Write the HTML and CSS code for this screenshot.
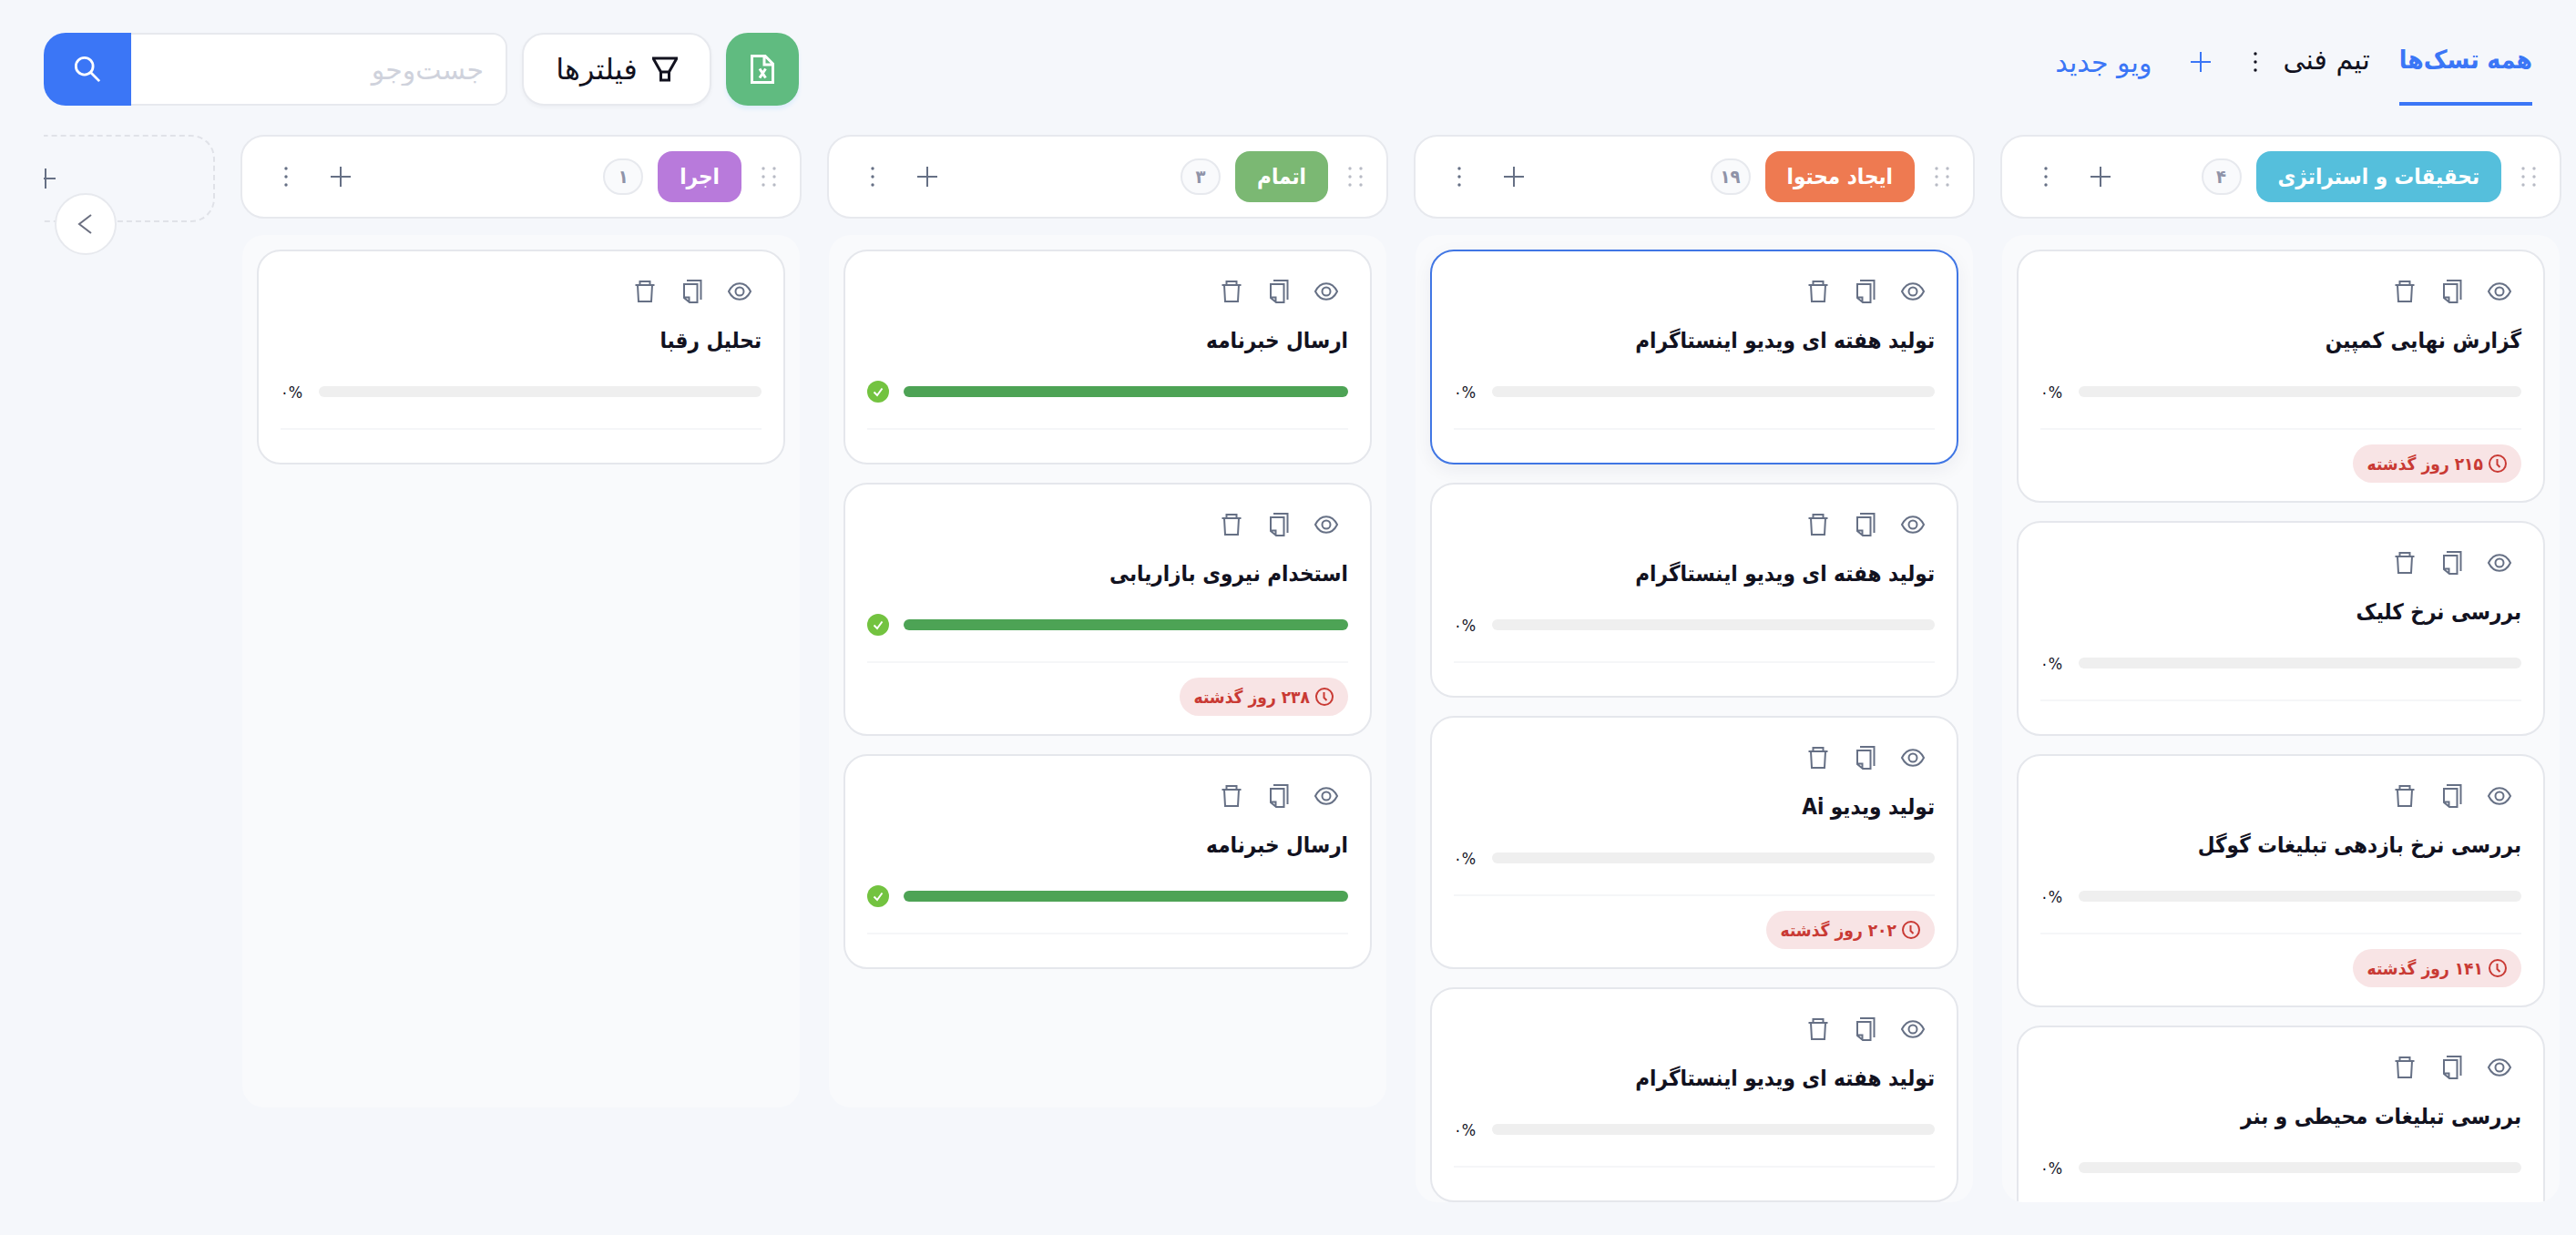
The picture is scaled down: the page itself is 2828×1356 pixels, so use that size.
FILE: index.html
```html
<!DOCTYPE html>
<html lang="fa" dir="rtl">
<head>
  <meta charset="UTF-8">
  <title>تسک‌ها</title>
  <link rel="stylesheet" href="styles.css">
</head>
<body>
  <!-- icons -->
  <svg class="sprite">
    <symbol id="eye" viewBox="0 0 28 28"><path d="M2 14C5 8 9 5.200 14 5.200S23 8 26 14C23 20 19 22.800 14 22.800S5 20 2 14Z"/><circle cx="14" cy="14" r="4.500"/></symbol>
    <symbol id="copy" viewBox="0 0 28 28"><path d="M8 2H23.500V23M5 6H19.500V26H11L5 21ZM5 20.500H10.500V26"/></symbol>
    <symbol id="trash" viewBox="0 0 28 28"><path d="M3.500 7H24.500M8.500 7V3H19.500V7M6 7L7 25H21L22 7"/></symbol>
    <symbol id="plus" viewBox="0 0 28 28"><path d="M14 3V25M3 14H25"/></symbol>
    <symbol id="more" viewBox="0 0 28 28"><circle cx="14" cy="5" r="1.700"/><circle cx="14" cy="14" r="1.700"/><circle cx="14" cy="23" r="1.700"/></symbol>
    <symbol id="grip" viewBox="0 0 28 28"><circle cx="8" cy="5" r="1.700"/><circle cx="20" cy="5" r="1.700"/><circle cx="8" cy="14" r="1.700"/><circle cx="20" cy="14" r="1.700"/><circle cx="8" cy="23" r="1.700"/><circle cx="20" cy="23" r="1.700"/></symbol>
    <symbol id="clock" viewBox="0 0 20 20"><circle cx="10" cy="10" r="9"/><path d="M9.500 5V11L12.500 14"/></symbol>
    <symbol id="check" viewBox="0 0 24 24"><circle cx="12" cy="12" r="12"/><path d="M7.500 12.500L11 16L16.500 8.500"/></symbol>
    <symbol id="funnel" viewBox="0 0 28 28"><path d="M1 2H27L18.500 17V26H9.500V17ZM9.500 17H18.500"/></symbol>
    <symbol id="sheet" viewBox="0 0 26 32"><path d="M1.500 1.500H16L24.500 10V30.500H1.500ZM15 1.500V11H24.500M10 15.500L16.500 25.500M16.500 15.500L10 25.500"/></symbol>
    <symbol id="search" viewBox="0 0 32 32"><circle cx="12.500" cy="12.500" r="10"/><path d="M19.500 19.500L30 30"/></symbol>
    <symbol id="back" viewBox="0 0 28 28"><path d="M20 4L7 14L20 24"/></symbol>
  </svg>

  <header class="topbar">
    <nav class="tabs">
      <a href="#" class="tab active">همه تسک‌ها</a>
      <a href="#" class="tab">تیم فنی</a>
      <button class="tab-more" aria-label="گزینه‌ها"><svg class="icon dots"><use href="#more"/></svg></button>
      <button class="new-view"><svg class="icon"><use href="#plus"/></svg>ویو جدید</button>
    </nav>
    <div class="tools">
      <button class="excel" aria-label="خروجی اکسل"><svg><use href="#sheet"/></svg></button>
      <button class="filter"><svg class="icon"><use href="#funnel"/></svg>فیلترها</button>
      <form class="search">
        <input type="search" placeholder="جست‌وجو" aria-label="جست‌وجو">
        <button type="button" aria-label="جست‌وجو"><svg><use href="#search"/></svg></button>
      </form>
    </div>
  </header>

  <main class="board">
    <section class="column">
      <div class="column-head">
        <svg class="icon dots grip"><use href="#grip"/></svg>
        <h2 class="label cyan">تحقیقات و استراتژی</h2>
        <span class="count">۴</span>
        <div class="head-actions">
          <button aria-label="افزودن"><svg class="icon"><use href="#plus"/></svg></button>
          <button aria-label="گزینه‌ها"><svg class="icon dots"><use href="#more"/></svg></button>
        </div>
      </div>
      <div class="column-body">
        <article class="card">
          <div class="actions">
            <button aria-label="نمایش"><svg class="icon"><use href="#eye"/></svg></button>
            <button aria-label="کپی"><svg class="icon"><use href="#copy"/></svg></button>
            <button aria-label="حذف"><svg class="icon"><use href="#trash"/></svg></button>
          </div>
          <h3>گزارش نهایی کمپین</h3>
          <div class="progress"><div class="bar"></div><span>۰%</span></div>
          <div class="card-foot"><span class="late"><svg><use href="#clock"/></svg>۲۱۵ روز گذشته</span></div>
        </article>
        <article class="card">
          <div class="actions">
            <button aria-label="نمایش"><svg class="icon"><use href="#eye"/></svg></button>
            <button aria-label="کپی"><svg class="icon"><use href="#copy"/></svg></button>
            <button aria-label="حذف"><svg class="icon"><use href="#trash"/></svg></button>
          </div>
          <h3>بررسی نرخ کلیک</h3>
          <div class="progress"><div class="bar"></div><span>۰%</span></div>
          <div class="card-foot"></div>
        </article>
        <article class="card">
          <div class="actions">
            <button aria-label="نمایش"><svg class="icon"><use href="#eye"/></svg></button>
            <button aria-label="کپی"><svg class="icon"><use href="#copy"/></svg></button>
            <button aria-label="حذف"><svg class="icon"><use href="#trash"/></svg></button>
          </div>
          <h3>بررسی نرخ بازدهی تبلیغات گوگل</h3>
          <div class="progress"><div class="bar"></div><span>۰%</span></div>
          <div class="card-foot"><span class="late"><svg><use href="#clock"/></svg>۱۴۱ روز گذشته</span></div>
        </article>
        <article class="card">
          <div class="actions">
            <button aria-label="نمایش"><svg class="icon"><use href="#eye"/></svg></button>
            <button aria-label="کپی"><svg class="icon"><use href="#copy"/></svg></button>
            <button aria-label="حذف"><svg class="icon"><use href="#trash"/></svg></button>
          </div>
          <h3>بررسی تبلیغات محیطی و بنر</h3>
          <div class="progress"><div class="bar"></div><span>۰%</span></div>
          <div class="card-foot"></div>
        </article>
      </div>
    </section>

    <section class="column">
      <div class="column-head">
        <svg class="icon dots grip"><use href="#grip"/></svg>
        <h2 class="label orange">ایجاد محتوا</h2>
        <span class="count">۱۹</span>
        <div class="head-actions">
          <button aria-label="افزودن"><svg class="icon"><use href="#plus"/></svg></button>
          <button aria-label="گزینه‌ها"><svg class="icon dots"><use href="#more"/></svg></button>
        </div>
      </div>
      <div class="column-body">
        <article class="card selected">
          <div class="actions">
            <button aria-label="نمایش"><svg class="icon"><use href="#eye"/></svg></button>
            <button aria-label="کپی"><svg class="icon"><use href="#copy"/></svg></button>
            <button aria-label="حذف"><svg class="icon"><use href="#trash"/></svg></button>
          </div>
          <h3>تولید هفته ای ویدیو اینستاگرام</h3>
          <div class="progress"><div class="bar"></div><span>۰%</span></div>
          <div class="card-foot"></div>
        </article>
        <article class="card">
          <div class="actions">
            <button aria-label="نمایش"><svg class="icon"><use href="#eye"/></svg></button>
            <button aria-label="کپی"><svg class="icon"><use href="#copy"/></svg></button>
            <button aria-label="حذف"><svg class="icon"><use href="#trash"/></svg></button>
          </div>
          <h3>تولید هفته ای ویدیو اینستاگرام</h3>
          <div class="progress"><div class="bar"></div><span>۰%</span></div>
          <div class="card-foot"></div>
        </article>
        <article class="card">
          <div class="actions">
            <button aria-label="نمایش"><svg class="icon"><use href="#eye"/></svg></button>
            <button aria-label="کپی"><svg class="icon"><use href="#copy"/></svg></button>
            <button aria-label="حذف"><svg class="icon"><use href="#trash"/></svg></button>
          </div>
          <h3>تولید ویدیو Ai</h3>
          <div class="progress"><div class="bar"></div><span>۰%</span></div>
          <div class="card-foot"><span class="late"><svg><use href="#clock"/></svg>۲۰۲ روز گذشته</span></div>
        </article>
        <article class="card">
          <div class="actions">
            <button aria-label="نمایش"><svg class="icon"><use href="#eye"/></svg></button>
            <button aria-label="کپی"><svg class="icon"><use href="#copy"/></svg></button>
            <button aria-label="حذف"><svg class="icon"><use href="#trash"/></svg></button>
          </div>
          <h3>تولید هفته ای ویدیو اینستاگرام</h3>
          <div class="progress"><div class="bar"></div><span>۰%</span></div>
          <div class="card-foot"></div>
        </article>
      </div>
    </section>

    <section class="column">
      <div class="column-head">
        <svg class="icon dots grip"><use href="#grip"/></svg>
        <h2 class="label green">اتمام</h2>
        <span class="count">۳</span>
        <div class="head-actions">
          <button aria-label="افزودن"><svg class="icon"><use href="#plus"/></svg></button>
          <button aria-label="گزینه‌ها"><svg class="icon dots"><use href="#more"/></svg></button>
        </div>
      </div>
      <div class="column-body">
        <article class="card">
          <div class="actions">
            <button aria-label="نمایش"><svg class="icon"><use href="#eye"/></svg></button>
            <button aria-label="کپی"><svg class="icon"><use href="#copy"/></svg></button>
            <button aria-label="حذف"><svg class="icon"><use href="#trash"/></svg></button>
          </div>
          <h3>ارسال خبرنامه</h3>
          <div class="progress"><div class="bar done"></div><svg class="check"><use href="#check"/></svg></div>
          <div class="card-foot"></div>
        </article>
        <article class="card">
          <div class="actions">
            <button aria-label="نمایش"><svg class="icon"><use href="#eye"/></svg></button>
            <button aria-label="کپی"><svg class="icon"><use href="#copy"/></svg></button>
            <button aria-label="حذف"><svg class="icon"><use href="#trash"/></svg></button>
          </div>
          <h3>استخدام نیروی بازاریابی</h3>
          <div class="progress"><div class="bar done"></div><svg class="check"><use href="#check"/></svg></div>
          <div class="card-foot"><span class="late"><svg><use href="#clock"/></svg>۲۳۸ روز گذشته</span></div>
        </article>
        <article class="card">
          <div class="actions">
            <button aria-label="نمایش"><svg class="icon"><use href="#eye"/></svg></button>
            <button aria-label="کپی"><svg class="icon"><use href="#copy"/></svg></button>
            <button aria-label="حذف"><svg class="icon"><use href="#trash"/></svg></button>
          </div>
          <h3>ارسال خبرنامه</h3>
          <div class="progress"><div class="bar done"></div><svg class="check"><use href="#check"/></svg></div>
          <div class="card-foot"></div>
        </article>
      </div>
    </section>

    <section class="column">
      <div class="column-head">
        <svg class="icon dots grip"><use href="#grip"/></svg>
        <h2 class="label purple">اجرا</h2>
        <span class="count">۱</span>
        <div class="head-actions">
          <button aria-label="افزودن"><svg class="icon"><use href="#plus"/></svg></button>
          <button aria-label="گزینه‌ها"><svg class="icon dots"><use href="#more"/></svg></button>
        </div>
      </div>
      <div class="column-body">
        <article class="card">
          <div class="actions">
            <button aria-label="نمایش"><svg class="icon"><use href="#eye"/></svg></button>
            <button aria-label="کپی"><svg class="icon"><use href="#copy"/></svg></button>
            <button aria-label="حذف"><svg class="icon"><use href="#trash"/></svg></button>
          </div>
          <h3>تحلیل رقبا</h3>
          <div class="progress"><div class="bar"></div><span>۰%</span></div>
          <div class="card-foot"></div>
        </article>
      </div>
    </section>

    <button class="add-column" aria-label="ستون جدید"><svg class="icon"><use href="#plus"/></svg></button>
  </main>

  <button class="scroll-next" aria-label="بعدی"><svg class="icon"><use href="#back"/></svg></button>
</body>
</html>
```

FILE: styles.css
```css
* {
  box-sizing: border-box;
}

body {
  margin: 0;
  height: 100vh;
  padding: 36px 0;
  display: flex;
  flex-direction: column;
  gap: 32px;
  overflow: hidden;
  background: #f5f7fb;
  color: #12121f;
  font-family: "DejaVu Sans Condensed", "DejaVu Sans", sans-serif;
  font-size: 24px;
}

button {
  display: flex;
  align-items: center;
  justify-content: center;
  padding: 0;
  border: none;
  background: none;
  color: inherit;
  font: inherit;
  cursor: pointer;
}

h2, h3 {
  margin: 0;
}

svg {
  display: block;
  flex: none;
  fill: none;
  stroke: currentColor;
  stroke-width: 2;
}

.sprite {
  display: none;
}

.icon {
  width: 28px;
  height: 28px;
}

.dots {
  fill: currentColor;
  stroke: none;
}

/* top bar */
.topbar {
  display: flex;
  justify-content: space-between;
  height: 80px;
  flex: none;
  padding: 0 48px;
  font-family: "DejaVu Sans", sans-serif;
  font-size: 30px;
}

.tabs {
  display: flex;
}

.tab {
  display: flex;
  margin-left: 32px;
  padding-top: 12px;
  line-height: 36px;
  border-bottom: 4px solid transparent;
  color: #12121f;
  text-decoration: none;
}

.tab.active {
  color: #3b76f6;
  border-color: #3b76f6;
  font-family: "DejaVu Sans Condensed", "DejaVu Sans", sans-serif;
  font-size: 28px;
  font-weight: bold;
}

.tab-more {
  height: 64px;
  margin-right: -16px;
}

.new-view {
  height: 64px;
  gap: 40px;
  margin-right: 32px;
  color: #3b76f6;
}

.tools {
  display: flex;
  gap: 16px;
}

.excel {
  width: 80px;
  border-radius: 24px;
  background: #60bb80;
  color: #ffffff;
  box-shadow: 0 4px 4px #dfeefc;
}

.excel svg {
  width: 26px;
  height: 32px;
  stroke-width: 3;
}

.filter {
  gap: 16px;
  width: 208px;
  border: 2px solid #e7e9ee;
  border-radius: 24px;
  background: #ffffff;
  font-size: 32px;
  box-shadow: 0 2px 4px rgba(20, 30, 60, 0.04);
}

.filter svg {
  stroke-width: 3;
}

.search {
  display: flex;
  width: 509px;
}

.search input {
  flex: 1;
  min-width: 0;
  padding: 0 24px;
  border: 2px solid #e7e9ee;
  border-left: none;
  border-radius: 0 16px 16px 0;
  background: #ffffff;
  font: inherit;
}

.search input::placeholder {
  color: #cfd2dc;
}

.search button {
  width: 96px;
  border-radius: 24px 0 0 24px;
  background: #3b76f6;
  color: #ffffff;
}

.search svg {
  width: 30px;
  height: 30px;
  stroke-width: 3;
}

/* board */
.board {
  flex: 1;
  min-height: 0;
  display: flex;
  align-items: flex-start;
  gap: 28px;
  margin-left: 48px;
  padding-right: 16px;
  overflow: hidden;
}

.column {
  flex: none;
  display: flex;
  flex-direction: column;
  gap: 18px;
  width: 616px;
  max-height: 100%;
}

.column-head {
  display: flex;
  align-items: center;
  flex: none;
  gap: 16px;
  height: 92px;
  padding: 0 20px 0 24px;
  border: 2px solid #e7e9ee;
  border-radius: 26px;
  background: #ffffff;
}

.grip {
  color: #b8bbc5;
}

.label {
  padding: 0 24px;
  border-radius: 16px;
  color: #ffffff;
  font-size: 24px;
  line-height: 56px;
}

.cyan {
  background: #55bfdc;
}

.orange {
  background: #ee7a51;
}

.green {
  background: #7bb873;
}

.purple {
  background: #b87adb;
}

.count {
  width: 44px;
  border: 2px solid #e7e9ee;
  border-radius: 22px;
  background: #f9fafc;
  color: #8f93a8;
  font-size: 20px;
  font-weight: bold;
  line-height: 36px;
  text-align: center;
}

.head-actions {
  display: flex;
  gap: 12px;
  margin-right: auto;
  color: #667085;
}

.head-actions button {
  width: 48px;
  height: 48px;
}

.column-body {
  display: flex;
  flex-direction: column;
  gap: 20px;
  min-height: 958px;
  margin: 0 2px;
  padding: 16px;
  border-radius: 24px;
  background: #f9fafc;
  overflow: hidden;
}

.card {
  flex: none;
  padding: 24px 24px 20px;
  border: 2px solid #e5e7ec;
  border-radius: 26px;
  background: #ffffff;
}

.card.selected {
  border-color: #4076e4;
  box-shadow: 0 6px 20px rgba(20, 30, 60, 0.06);
}

.actions {
  display: flex;
  gap: 4px;
  color: #667085;
}

.actions button {
  width: 48px;
  height: 40px;
}

.card h3 {
  margin-top: 12px;
  font-size: 24px;
  line-height: 44px;
}

.progress {
  display: flex;
  align-items: center;
  justify-content: space-between;
  gap: 16px;
  height: 40px;
  margin-top: 14px;
}

.progress span {
  direction: ltr;
  width: 26px;
  font-size: 18px;
}

.bar {
  flex: 1;
  height: 12px;
  border-radius: 6px;
  background: #efefef;
}

.bar.done {
  background: #4da355;
}

.check {
  width: 24px;
  height: 24px;
  fill: #73c340;
  stroke: none;
}

#check path {
  fill: none;
  stroke: #ffffff;
}

.card-foot {
  display: flex;
  margin-top: 20px;
  padding-top: 16px;
  border-top: 2px solid #f5f6f8;
}

.late {
  display: flex;
  align-items: center;
  gap: 6px;
  height: 42px;
  padding: 0 16px;
  border-radius: 21px;
  background: #f8e4e5;
  color: #c93a34;
  font-size: 19px;
  font-weight: bold;
}

.late svg {
  width: 20px;
  height: 20px;
}

.add-column {
  flex: none;
  justify-content: flex-start;
  width: 616px;
  height: 96px;
  padding-right: 170px;
  border: 2px dashed #e0e2e8;
  border-radius: 26px;
  color: #667085;
}

/* floats over the end of the board */
.scroll-next {
  position: absolute;
  top: 212px;
  left: 60px;
  width: 68px;
  height: 68px;
  border: 2px solid #e7e9ee;
  border-radius: 50%;
  background: #ffffff;
  color: #6b6f80;
}
```
